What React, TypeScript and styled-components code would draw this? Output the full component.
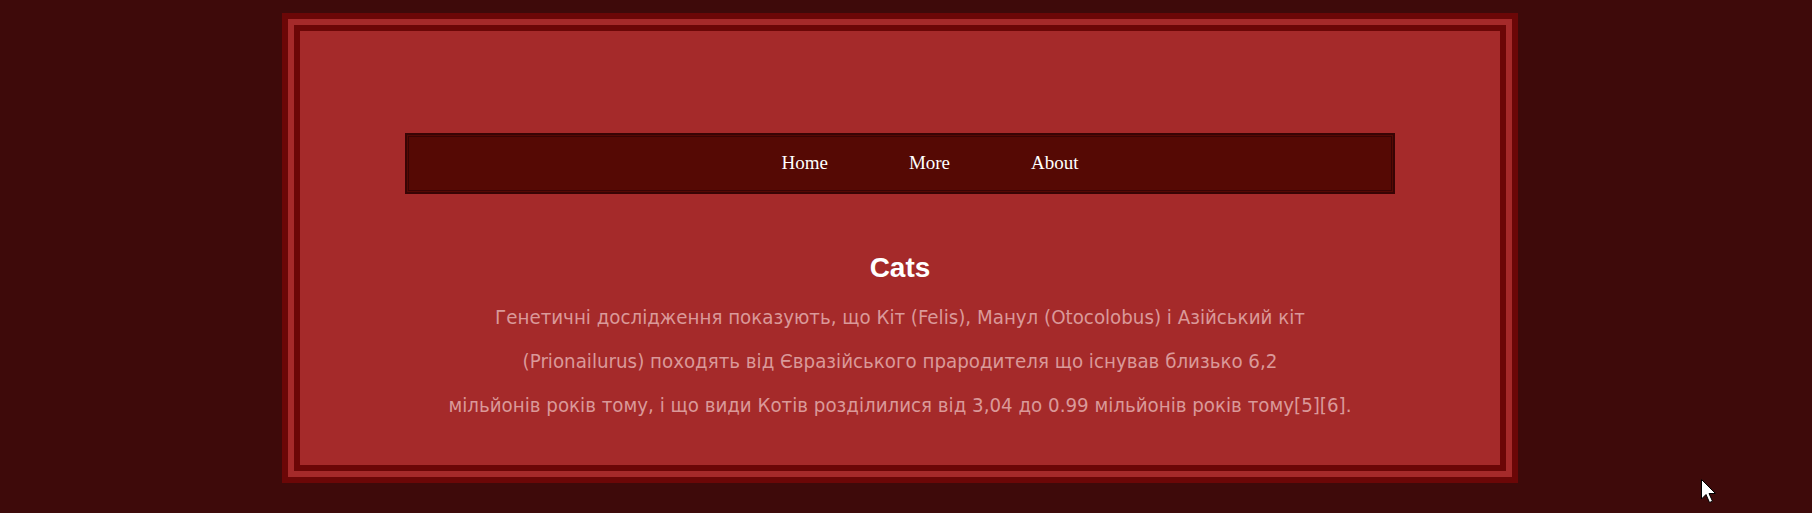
import React from "react";
import styled, { createGlobalStyle } from "styled-components";

const GlobalStyle = createGlobalStyle`
  html, body {
    margin: 0;
    padding: 0;
    background: #3e0a0a;
  }
  #root {
    min-height: 513px;
  }
`;

const Page = styled.div`
  position: relative;
  width: 1812px;
  height: 513px;
  padding-top: 13px;
  padding-left: 282px;
  box-sizing: border-box;
  overflow: hidden;
`;

const Frame = styled.div`
  width: 1236px;
  height: 470px;
  box-sizing: border-box;
  border: 18px double #6b0707;
  background: #a52a2a;
  padding-top: 102px;
  display: flex;
  flex-direction: column;
  align-items: center;
`;

const Nav = styled.nav`
  width: 990px;
  height: 61px;
  box-sizing: border-box;
  background: #550904;
  border: 2px solid #380404;
  box-shadow: inset 0 0 0 1px #550904, inset 0 0 0 2px #380404;
  display: flex;
  align-items: center;
  justify-content: center;
  padding-left: 60px;
  padding-bottom: 2px;
`;

const NavList = styled.ul`
  list-style: none;
  margin: 0;
  padding: 0;
  display: flex;
  gap: 81px;
`;

const NavItem = styled.li`
  font-family: "Liberation Serif", "Times New Roman", serif;
  font-size: 19px;
  color: #ffffff;
  line-height: normal;
`;

const Title = styled.h2`
  margin: 58px 0 0;
  font-family: "Liberation Sans", Arial, sans-serif;
  font-weight: bold;
  font-size: 28px;
  line-height: 32px;
  color: #ffffff;
  text-align: center;
`;

const Text = styled.p`
  margin: 11px 0 0;
  font-family: "DejaVu Sans Condensed", "DejaVu Sans", sans-serif;
  font-size: 20.3px;
  line-height: 44px;
  color: #da9999;
  text-align: center;
`;

const Cursor = styled.svg`
  position: absolute;
  left: 1701px;
  top: 479px;
`;

export default function App() {
  return (
    <>
      <GlobalStyle />
      <Page>
        <Frame>
          <Nav>
            <NavList>
              <NavItem>Home</NavItem>
              <NavItem>More</NavItem>
              <NavItem>About</NavItem>
            </NavList>
          </Nav>
          <Title>Cats</Title>
          <Text>
            Генетичні дослідження показують, що Кіт (Felis), Манул (Otocolobus) і Азійський кіт
            <br />
            (Prionailurus) походять від Євразійського прародителя що існував близько 6,2
            <br />
            мільйонів років тому, і що види Котів розділилися від 3,04 до 0.99 мільйонів років тому[5][6].
          </Text>
        </Frame>
        <Cursor width="18" height="26" viewBox="0 0 18 26">
          <path
            d="M0.5 0.5 L0.5 20 L5 15.5 L8.5 23.5 L11.5 22.2 L8 14.5 L14.5 14.5 Z"
            fill="#ffffff"
            stroke="#000000"
            strokeWidth="1"
            strokeLinejoin="miter"
          />
        </Cursor>
      </Page>
    </>
  );
}
